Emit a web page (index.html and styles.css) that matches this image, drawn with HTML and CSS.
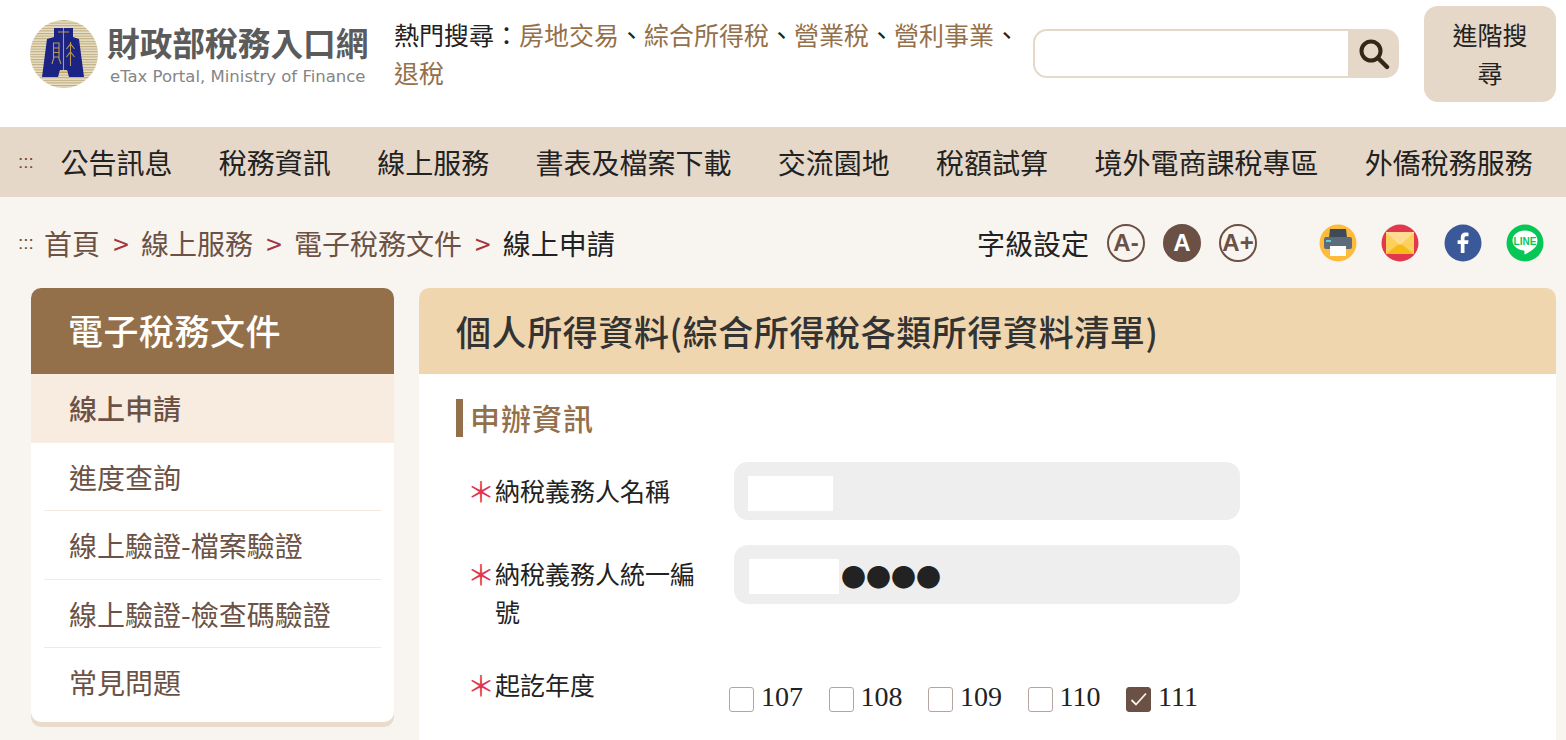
FILE: index.html
```html
<!DOCTYPE html>
<html lang="zh-Hant">
<head>
<meta charset="utf-8">
<title>財政部稅務入口網</title>
<link rel="stylesheet" href="styles.css">
</head>
<body>
<header class="site-header">
  <a class="logo">
    <svg class="emblem" width="68" height="68" viewBox="0 0 68 68">
      <defs>
        <pattern id="stripes" width="4" height="2.6" patternUnits="userSpaceOnUse">
          <rect width="4" height="2.6" fill="#ebe1c6"/>
          <rect width="4" height="1.1" fill="#bcab7e"/>
        </pattern>
      </defs>
      <circle cx="34" cy="34" r="34" fill="url(#stripes)"/>
      <path d="M24 8H43V17L49 19L54 57H39L37 50H30L28 57H12L17 19L24 17Z" fill="#1b2384"/>
      <path d="M33.5 8V50M28 12H39M29 52H38M23.500 23H29V37H23.500ZM23.500 28H29M23.500 32.500H29M24 37L22 44M28.500 37L31 44M40.500 22V46M36.500 29L40.500 24L44.500 29M36.500 37L40.500 32L44.500 37" fill="none" stroke="#b99a57" stroke-width="1.100"/>
    </svg>
    <span class="logo-text">
      <span class="logo-zh">財政部稅務入口網</span>
      <span class="logo-en">eTax Portal, Ministry of Finance</span>
    </span>
  </a>
  <p class="hot">熱門搜尋：<a>房地交易</a>、<a>綜合所得稅</a>、<a>營業稅</a>、<a>營利事業</a>、<a>退稅</a></p>
  <form class="search">
    <input class="search-input" type="text" aria-label="搜尋">
    <span class="search-btn">
      <svg width="32" height="32" viewBox="0 0 32 32"><circle cx="13" cy="13" r="9.5" fill="none" stroke="#35261a" stroke-width="4"/><path d="M20 20L29 29" stroke="#35261a" stroke-width="4.400" stroke-linecap="round"/></svg>
    </span>
  </form>
  <a class="adv">進階搜尋</a>
</header>

<nav class="main-nav">
  <span class="dots">:::</span>
  <a>公告訊息</a><a>稅務資訊</a><a>線上服務</a><a>書表及檔案下載</a><a>交流園地</a><a>稅額試算</a><a>境外電商課稅專區</a><a>外僑稅務服務</a>
</nav>

<div class="crumb-bar">
  <span class="dots">:::</span>
  <ol class="crumbs">
    <li>首頁</li><li class="sep">&gt;</li><li>線上服務</li><li class="sep">&gt;</li><li>電子稅務文件</li><li class="sep">&gt;</li><li class="here">線上申請</li>
  </ol>
  <div class="font-size">
    <span class="fs-label">字級設定</span>
    <span class="fs-btn">A-</span>
    <span class="fs-btn on">A</span>
    <span class="fs-btn">A+</span>
  </div>
  <div class="shares">
    <svg width="38" height="38" viewBox="0 0 38 38"><circle cx="19" cy="19" r="18.500" fill="#fdbb3c"/><path d="M11 5H27L28 14H10Z" fill="#3f4a58"/><rect x="5" y="13" width="28" height="12" rx="2" fill="#5d6b7a"/><rect x="7" y="16" width="5" height="2" fill="#5fd0d0"/><rect x="11" y="22" width="16" height="10" fill="#fff"/></svg>
    <svg width="38" height="38" viewBox="0 0 38 38"><circle cx="19" cy="19" r="18.500" fill="#e2384d"/><rect x="5" y="8" width="28" height="22" fill="#fcd05a"/><path d="M5 30L19 19L33 30Z" fill="#f5bb18"/><path d="M5 8H33V9L19 21L5 9Z" fill="#fddc92"/></svg>
    <svg width="38" height="38" viewBox="0 0 38 38"><circle cx="19" cy="19" r="18.500" fill="#3b5998"/><path d="M20.500 29V20H24L24.500 16.200H20.500V14C20.500 12.800 21 12.200 22.400 12.200H24.500V8.800C24 8.700 22.800 8.600 21.600 8.600C18.600 8.600 16.800 10.400 16.800 13.600V16.200H13.600V20H16.800V29Z" fill="#fff"/></svg>
    <svg width="38" height="38" viewBox="0 0 38 38"><circle cx="19" cy="19" r="18.500" fill="#06c755"/><path d="M19 6.500C11.800 6.500 6.500 10.900 6.500 16.500C6.500 21.900 11.600 26.100 18 26.500C18.600 26.500 18.400 30 18.600 30.400C19 31 25 27 28 24.500C30.500 22.600 31.500 19.500 31.500 16.500C31.500 10.900 26.200 6.500 19 6.500Z" fill="#fff"/><text class="line-text" x="19" y="20.500" text-anchor="middle">LINE</text></svg>
  </div>
</div>

<div class="layout">
  <aside class="side">
    <h2 class="side-title">電子稅務文件</h2>
    <ul class="side-list">
      <li class="active">線上申請</li>
      <li>進度查詢</li>
      <li>線上驗證-檔案驗證</li>
      <li>線上驗證-檢查碼驗證</li>
      <li>常見問題</li>
    </ul>
  </aside>
  <main class="panel">
    <h1 class="panel-title">個人所得資料(綜合所得稅各類所得資料清單)</h1>
    <div class="panel-body">
      <h3 class="section">申辦資訊</h3>
      <div class="row row-a">
        <label class="lbl"><span class="star">＊</span>納稅義務人名稱</label>
        <div class="field"><span class="mask mask-a"></span></div>
      </div>
      <div class="row row-b">
        <label class="lbl"><span class="star">＊</span>納稅義務人統一編號</label>
        <div class="field"><span class="mask mask-b"></span><span class="bullets">●●●●</span></div>
      </div>
      <div class="row row-c">
        <label class="lbl"><span class="star">＊</span>起訖年度</label>
        <div class="checks">
          <label class="chk"><span class="box"></span>107</label>
          <label class="chk"><span class="box"></span>108</label>
          <label class="chk"><span class="box"></span>109</label>
          <label class="chk"><span class="box"></span>110</label>
          <label class="chk"><span class="box checked"><svg width="23" height="23" viewBox="0 0 23 23"><path d="M4.500 12L9 16.500L19 5.500" fill="none" stroke="#f7f3ee" stroke-width="1.800"/></svg></span>111</label>
        </div>
      </div>
    </div>
  </main>
</div>
</body>
</html>
```
FILE: styles.css
```css
* { box-sizing: border-box; }
html, body { margin: 0; padding: 0; height: 740px; overflow: hidden; }
body {
  background: #f8f4ef;
  color: #222;
  font-family: "Noto Sans CJK TC", "Noto Sans", sans-serif;
  font-size: 25px;
}
ol, ul { list-style: none; margin: 0; padding: 0; }
h1, h2, h3, p { margin: 0; }

.site-header {
  height: 127px;
  background: #fff;
  display: flex;
  align-items: flex-start;
  padding: 6px 10px 0 30px;
}
.logo { display: flex; align-items: center; gap: 9px; width: 364px; height: 96px; flex: none; }
.emblem { flex: none; }
.logo-text { display: flex; flex-direction: column; align-items: flex-start; }
.logo-zh { font-size: 32.7px; line-height: 40px; font-weight: 700; color: #5b5b5b; white-space: nowrap; }
.logo-en { font-family: "DejaVu Sans", sans-serif; font-size: 16.5px; line-height: 20px; color: #858585; white-space: nowrap; margin: 5px 0 0 3px; }
.hot { width: 639px; flex: none; line-height: 37.5px; padding-top: 10px; color: #222; }
.hot a { color: #94704a; }
.search { display: flex; width: 366px; height: 49px; margin-top: 23px; flex: none; }
.search-input {
  flex: 1; min-width: 0; height: 49px;
  border: 2px solid #e6d8c8; border-right: 0;
  border-radius: 14px 0 0 14px;
  background: #fff; outline: 0;
}
.search-btn {
  width: 51px; background: #e6d8c8; border-radius: 0 14px 14px 0;
  display: flex; align-items: center; justify-content: center;
}
.adv {
  width: 132px; height: 96px; margin-left: 25px; flex: none;
  background: #e6d8c8; border-radius: 14px;
  text-align: center; line-height: 38px; padding: 9px 25px;
  color: #222;
}

.dots { color: #6b4e3e; font-size: 19px; font-family: "Liberation Sans", sans-serif; }
.main-nav {
  height: 70px;
  background: #e6d8c8;
  display: flex;
  align-items: center;
  padding: 0 18px;
  font-size: 28px;
  color: #222;
  white-space: nowrap;
}
.main-nav .dots { width: 42.5px; flex: none; }
.main-nav a { margin-right: 46.3px; flex: none; }
.main-nav a:last-child { margin-right: 0; }

.crumb-bar {
  height: 91px;
  display: flex;
  align-items: center;
  padding: 0 22px 0 18px;
  font-size: 28px;
}
.crumb-bar .dots { width: 26px; flex: none; }
.crumbs { display: flex; width: 934px; flex: none; color: #6c5245; }
.crumbs .sep { color: #a4363f; margin: 0 12.2px 0 13.2px; }
.crumbs .here { color: #222; }
.font-size { display: flex; align-items: center; width: 341px; flex: none; margin-left: -1px; margin-right: 1px; }
.fs-label { font-size: 28px; margin-right: 18px; }
.fs-btn {
  width: 38px; height: 38px; border-radius: 50%;
  border: 2px solid #6b5045; color: #6b5045;
  display: flex; align-items: center; justify-content: center;
  font-family: "Liberation Sans Narrow", "Liberation Sans", sans-serif; font-weight: 700; font-size: 24px;
  margin-right: 18px;
}
.fs-btn.on { background: #6b5045; color: #fff; }
.shares { display: flex; gap: 24.3px; }
.line-text { font: 700 10px "Liberation Sans Narrow", "Liberation Sans", sans-serif; fill: #06c755; }

.layout { display: flex; align-items: flex-start; padding-left: 31px; gap: 25px; padding-right: 10px; }
.side {
  width: 363px; flex: none; background: #fff;
  border-radius: 10px;
  box-shadow: 0 5px 0 #e9dccd;
  overflow: hidden;
}
.side-title {
  height: 86px; background: #94704a; color: #fff;
  font-size: 35px; font-weight: 500; line-height: 84px; padding-left: 37px; letter-spacing: 0.5px;
}
.side-list li {
  margin: 0 13px; padding-left: 25px;
  height: 68.5px; line-height: 68px;
  font-size: 28px; color: #6c5245;
  border-bottom: 1px solid #f3e9df;
}
.side-list li:last-child { border-bottom: 0; height: 74px; }
.side-list li.active {
  margin: 0; padding-left: 38px; background: #f8ebe0; font-weight: 500; border-bottom: 0;
}

.panel { flex: 1; min-width: 0; background: #fff; border-radius: 10px 10px 0 0; overflow: hidden; height: 600px; }
.panel-title {
  height: 86px; background: #efd6ae; color: #333;
  font-size: 35px; font-weight: 500; line-height: 86px; padding-left: 37px; letter-spacing: 0.6px;
  white-space: nowrap;
}
.panel-body { padding: 25px 37px 0; }
.section {
  border-left: 7px solid #94704a;
  height: 38px; line-height: 37px;
  padding-left: 7px;
  font-size: 30px; font-weight: 500; color: #94704a; letter-spacing: 1px;
}
.row { display: flex; align-items: flex-start; }
.row-a { margin-top: 25px; }
.row-b { margin-top: 25px; }
.row-c { margin-top: 26px; }
.lbl {
  width: 278px; flex: none; padding: 9px 18px 0 39px;
  line-height: 38px; text-indent: -28px;
}
.star {
  display: inline-block; width: 28px;
  text-indent: 0; color: #dd3850; font-size: 28px; line-height: 1; vertical-align: -2px; white-space: nowrap;
}
.field {
  width: 506px; height: 58px; border-radius: 14px; background: #eee;
  display: flex; align-items: center; padding-left: 14px;
}
.row-b .field { height: 59px; padding-left: 15px; }
.mask { display: block; height: 35px; background: #fff; margin-top: 4px; }
.mask-a { width: 85px; }
.mask-b { width: 90px; }
.bullets { font-size: 25px; line-height: 35px; color: #222; margin: 4px 0 0 2px; }
.checks { display: flex; gap: 25.5px; margin-top: 22px; margin-left: -5px; font-family: "Liberation Serif", serif; font-size: 28px; }
.chk { display: flex; align-items: center; gap: 7px; line-height: 38px; }
.box {
  width: 25px; height: 25px; border: 1px solid #b5a5a0; border-radius: 3px; background: #fff;
  display: block; margin-top: 4px;
}
.box.checked { background: #6b5045; border-color: #6b5045; }
.box svg { display: block; }
```
